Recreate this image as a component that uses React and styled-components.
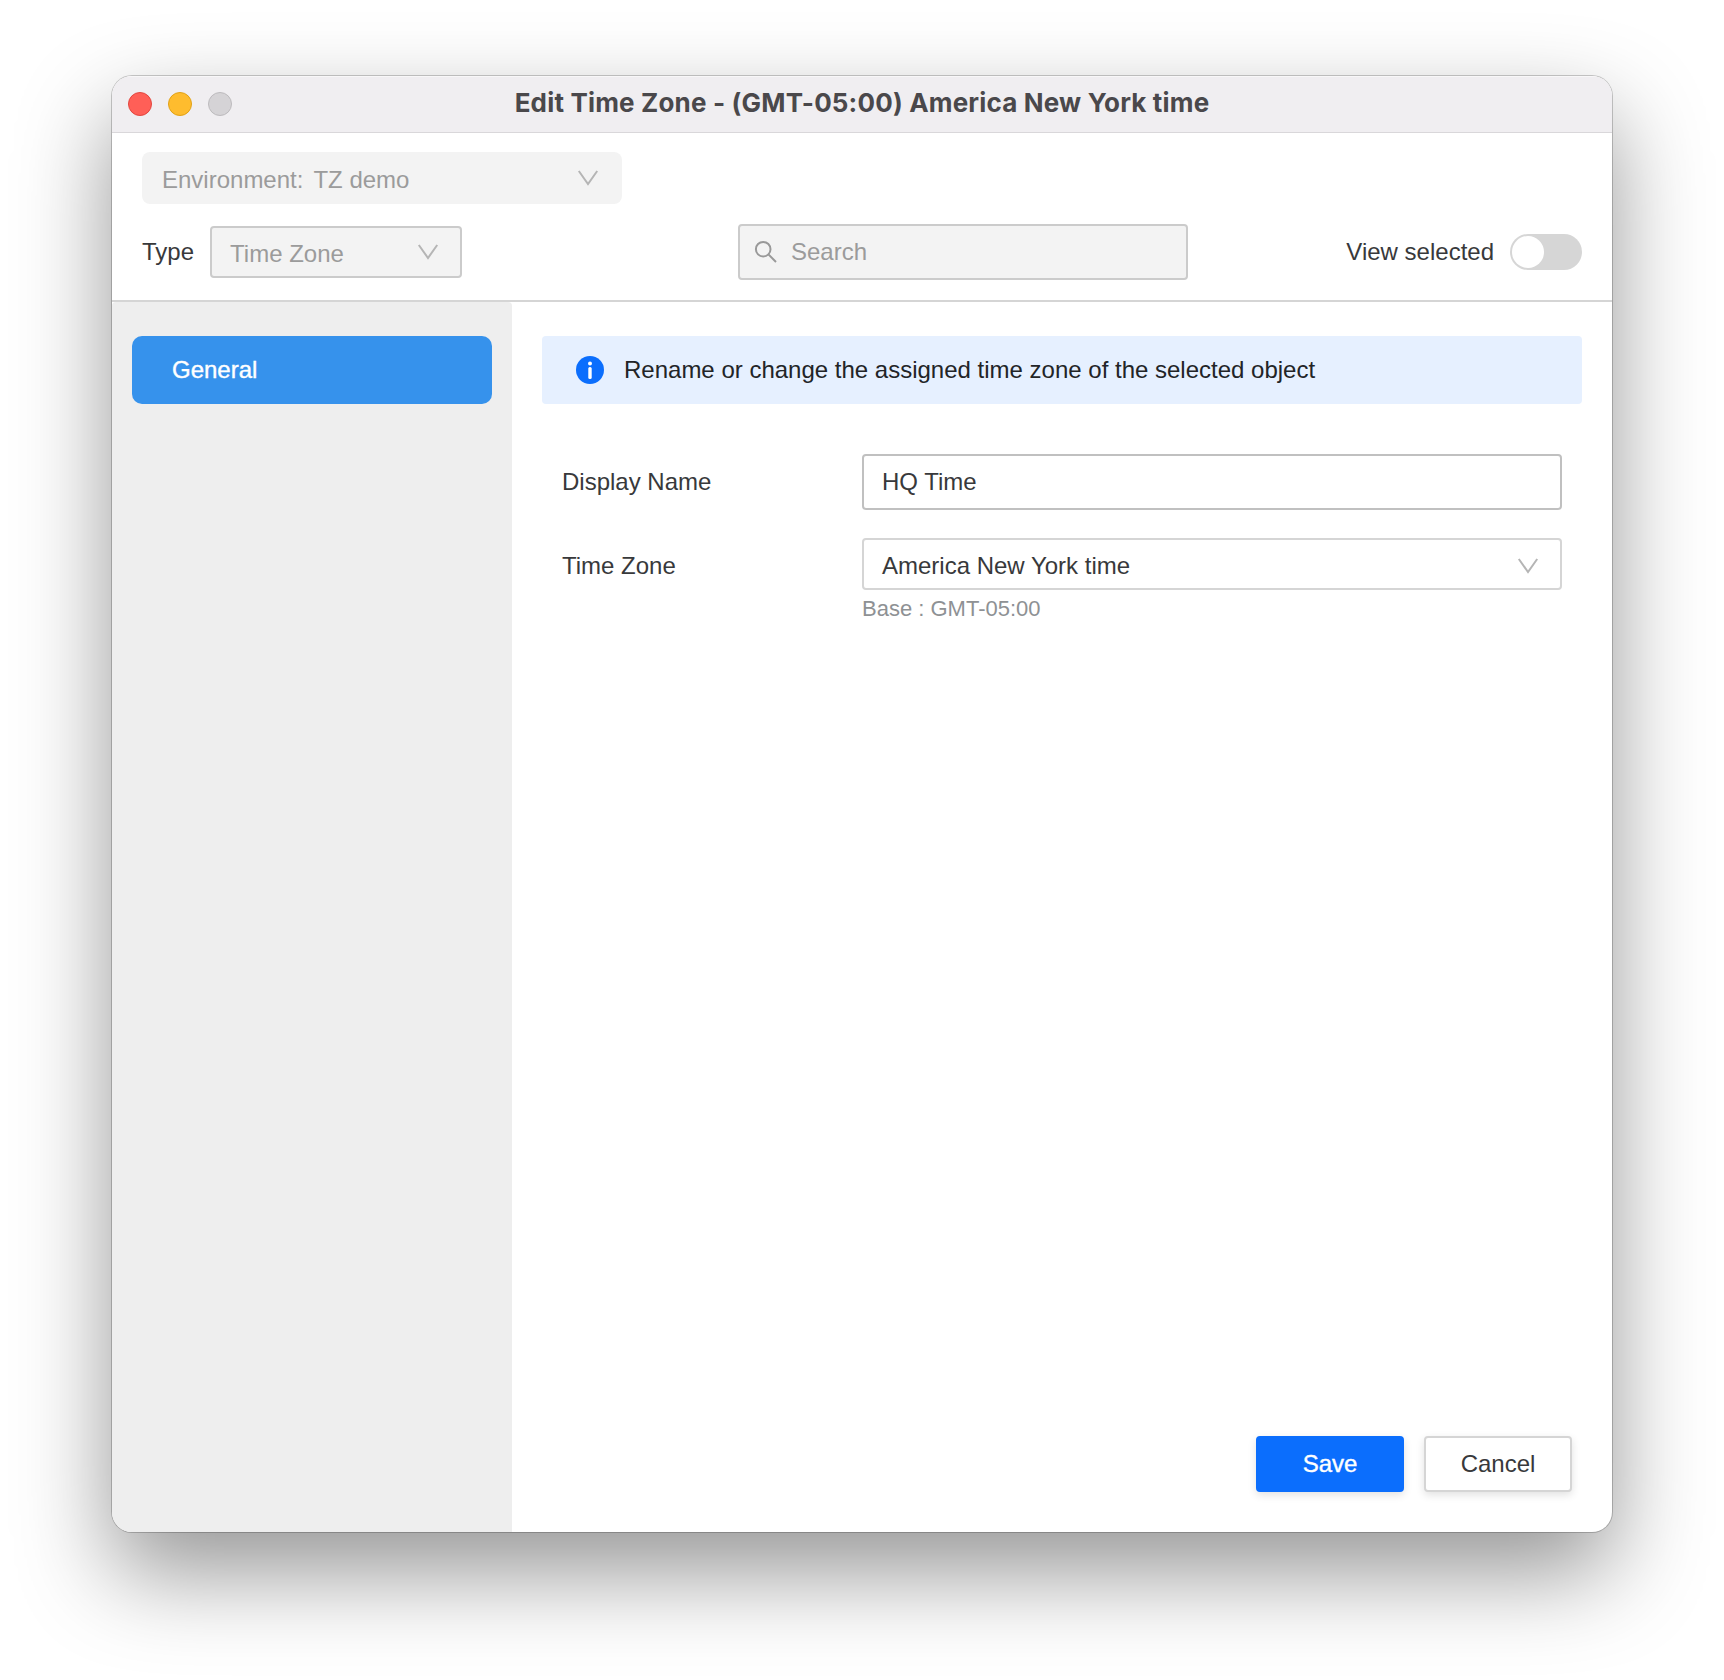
import React, { useState } from "react";
import styled, { createGlobalStyle } from "styled-components";

const App = () => {
  const [name, setName] = useState("HQ Time");
  const [viewSelected, setViewSelected] = useState(false);

  return (
    <Desktop>
      <GlobalStyle />
      <Window>
        <TitleBar>
          <Lights>
            <Light $color="#ff5f57" $border="#e2463f" />
            <Light $color="#febc2e" $border="#e1a116" />
            <Light $color="#d5d3d6" $border="#bcbabd" />
          </Lights>
          <Title>Edit Time Zone - (GMT-05:00) America New York time</Title>
        </TitleBar>
        <Toolbar>
          <EnvironmentSelect>
            <span>Environment:</span>
            <EnvName>TZ demo</EnvName>
            <Chevron />
          </EnvironmentSelect>
          <Filters>
            <TypeGroup>
              <span>Type</span>
              <Select $width="252px" $disabled>
                <span>Time Zone</span>
                <Chevron />
              </Select>
            </TypeGroup>
            <SearchBox>
              <SearchIcon />
              <SearchInput placeholder="Search" disabled />
            </SearchBox>
            <ViewSelected>
              <span>View selected</span>
              <Toggle
                type="button"
                aria-label="View selected"
                $on={viewSelected}
                onClick={() => setViewSelected(!viewSelected)}
              >
                <Knob />
              </Toggle>
            </ViewSelected>
          </Filters>
        </Toolbar>
        <Body>
          <Sidebar>
            <NavItem>General</NavItem>
          </Sidebar>
          <Content>
            <Alert>
              <InfoIcon />
              <span>Rename or change the assigned time zone of the selected object</span>
            </Alert>
            <Form>
              <Label htmlFor="displayName">Display Name</Label>
              <TextInput id="displayName" value={name} onChange={(e) => setName(e.target.value)} />
              <Label as="span">Time Zone</Label>
              <div>
                <Select $width="100%">
                  <span>America New York time</span>
                  <Chevron $low />
                </Select>
                <Hint>Base : GMT-05:00</Hint>
              </div>
            </Form>
            <Footer>
              <Button $primary>Save</Button>
              <Button>Cancel</Button>
            </Footer>
          </Content>
        </Body>
      </Window>
    </Desktop>
  );
};

const Chevron = ({ $low }) => (
  <ChevronSvg $low={$low} width="22" height="16" viewBox="0 0 22 16" fill="none" stroke="#b5b5b5" strokeWidth="2">
    <path d="M1.8 1L11 14L20.2 1" />
  </ChevronSvg>
);

const SearchIcon = () => (
  <svg width="24" height="24" viewBox="0 0 24 24" fill="none" stroke="#999" strokeWidth="2">
    <circle cx="9.2" cy="9.2" r="7.3" />
    <path d="M14.4 14.4L22 22" />
  </svg>
);

const InfoIcon = () => (
  <svg width="28" height="28" viewBox="0 0 28 28">
    <circle cx="14" cy="14" r="14" fill="#0b6efd" />
    <circle cx="14" cy="7.5" r="2" fill="#fff" />
    <rect x="12.3" y="11" width="3.4" height="12" rx="1.5" fill="#fff" />
  </svg>
);

const GlobalStyle = createGlobalStyle`
  * {
    box-sizing: border-box;
  }
  body {
    margin: 0;
    background: #fff;
    overflow: hidden;
  }
`;

const Desktop = styled.div`
  width: 1724px;
  height: 1680px;
  padding: 76px 112px 148px;
  font-family: "Liberation Sans", Arial, sans-serif;
  font-size: 24px;
  line-height: 28px;
  color: #38393b;
`;

const Window = styled.div`
  display: flex;
  flex-direction: column;
  height: 1456px;
  overflow: hidden;
  border-radius: 20px;
  background: #fff;
  box-shadow: 0 0 0 1px rgba(0, 0, 0, 0.2), 0 40px 94px rgba(0, 0, 0, 0.42);
`;

const TitleBar = styled.div`
  display: grid;
  grid-template-columns: 120px 1fr 120px;
  align-items: center;
  height: 57px;
  padding: 0 16px;
  background: #f0eef1;
  border-bottom: 1px solid #d9d7da;
  box-shadow: inset 0 1px 0 #f8f7f8;
`;

const Lights = styled.div`
  display: flex;
  gap: 16px;
`;

const Light = styled.span`
  width: 24px;
  height: 24px;
  border-radius: 50%;
  background: ${(p) => p.$color};
  border: 1px solid ${(p) => p.$border};
`;

const Title = styled.div`
  padding-bottom: 2px;
  font-family: Inter, sans-serif;
  font-weight: 700;
  font-size: 26px;
  line-height: 32px;
  letter-spacing: 0.17px;
  text-align: center;
  white-space: nowrap;
  color: #4a484b;
`;

const Toolbar = styled.div`
  display: flex;
  flex-direction: column;
  gap: 20px;
  height: 169px;
  padding: 19px 30px 0;
  border-bottom: 2px solid #d5d5d5;
`;

const Select = styled.div`
  display: flex;
  align-items: center;
  width: ${(p) => p.$width};
  height: 52px;
  padding: 3px 21px 0 18px;
  border: 2px solid ${(p) => (p.$disabled ? "#cbcbcb" : "#d5d5d5")};
  border-radius: 4px;
  background: ${(p) => (p.$disabled ? "#f3f3f3" : "#fff")};
  color: ${(p) => (p.$disabled ? "#9b9b9b" : "inherit")};
`;

const EnvironmentSelect = styled(Select).attrs({ $disabled: true, $width: "480px" })`
  border-color: transparent;
  border-radius: 8px;
`;

const EnvName = styled.span`
  margin-left: 10px;
`;

const ChevronSvg = styled.svg`
  margin: ${(p) => (p.$low ? "0" : "-3px")} 0 0 auto;
`;

const Filters = styled.div`
  display: grid;
  grid-template-columns: 596px 450px 1fr;
  align-items: center;
  height: 56px;
`;

const TypeGroup = styled.div`
  display: flex;
  align-items: center;
  gap: 16px;
`;

const SearchBox = styled.div`
  display: flex;
  align-items: center;
  gap: 13px;
  height: 56px;
  padding: 0 14px;
  border: 2px solid #cbcbcb;
  border-radius: 4px;
  background: #f3f3f3;
`;

const SearchInput = styled.input`
  flex: 1;
  min-width: 0;
  padding: 0;
  border: none;
  outline: none;
  background: transparent;
  font: inherit;
  &::placeholder {
    color: #9b9b9b;
    opacity: 1;
  }
`;

const ViewSelected = styled.div`
  display: flex;
  align-items: center;
  justify-content: flex-end;
  gap: 16px;
`;

const Toggle = styled.button`
  display: flex;
  justify-content: ${(p) => (p.$on ? "flex-end" : "flex-start")};
  width: 72px;
  height: 36px;
  padding: 2px;
  border: none;
  border-radius: 18px;
  background: ${(p) => (p.$on ? "#0b6efd" : "#d6d6d6")};
`;

const Knob = styled.span`
  width: 32px;
  height: 32px;
  border-radius: 50%;
  background: #fff;
`;

const Body = styled.div`
  display: flex;
  flex: 1;
`;

const Sidebar = styled.div`
  width: 400px;
  padding: 34px 20px;
  border-radius: 4px 4px 0 0;
  background: #eee;
`;

const NavItem = styled.div`
  display: flex;
  align-items: center;
  height: 68px;
  padding-left: 40px;
  border-radius: 10px;
  background: #3692ec;
  color: #fff;
  -webkit-text-stroke: 0.4px #fff;
`;

const Content = styled.div`
  display: flex;
  flex-direction: column;
  flex: 1;
  padding: 34px 30px 40px;
`;

const Alert = styled.div`
  display: flex;
  align-items: center;
  gap: 20px;
  height: 68px;
  padding-left: 34px;
  border-radius: 4px;
  background: #e6f0ff;
  color: #222427;
`;

const Form = styled.div`
  display: grid;
  grid-template-columns: 300px 700px;
  row-gap: 28px;
  padding: 50px 20px 0;
`;

const Label = styled.label`
  height: 56px;
  line-height: 56px;
`;

const TextInput = styled.input`
  height: 56px;
  padding: 0 18px;
  border: 2px solid #c0c0c0;
  border-radius: 4px;
  outline: none;
  background: #fff;
  color: inherit;
  font: inherit;
`;

const Hint = styled.div`
  margin-top: 5px;
  font-size: 22px;
  color: #8e9194;
`;

const Footer = styled.div`
  display: flex;
  justify-content: flex-end;
  gap: 20px;
  margin-top: auto;
  padding-right: 10px;
`;

const Button = styled.button`
  width: 148px;
  height: 56px;
  padding: 0;
  border: 2px solid ${(p) => (p.$primary ? "#0b6efd" : "#d5d5d5")};
  border-radius: 4px;
  background: ${(p) => (p.$primary ? "#0b6efd" : "#fff")};
  color: ${(p) => (p.$primary ? "#fff" : "#38393b")};
  font: inherit;
  -webkit-text-stroke: ${(p) => (p.$primary ? "0.4px #fff" : "0")};
  box-shadow: 0 3px 8px rgba(0, 0, 0, 0.12);
`;

export default App;
